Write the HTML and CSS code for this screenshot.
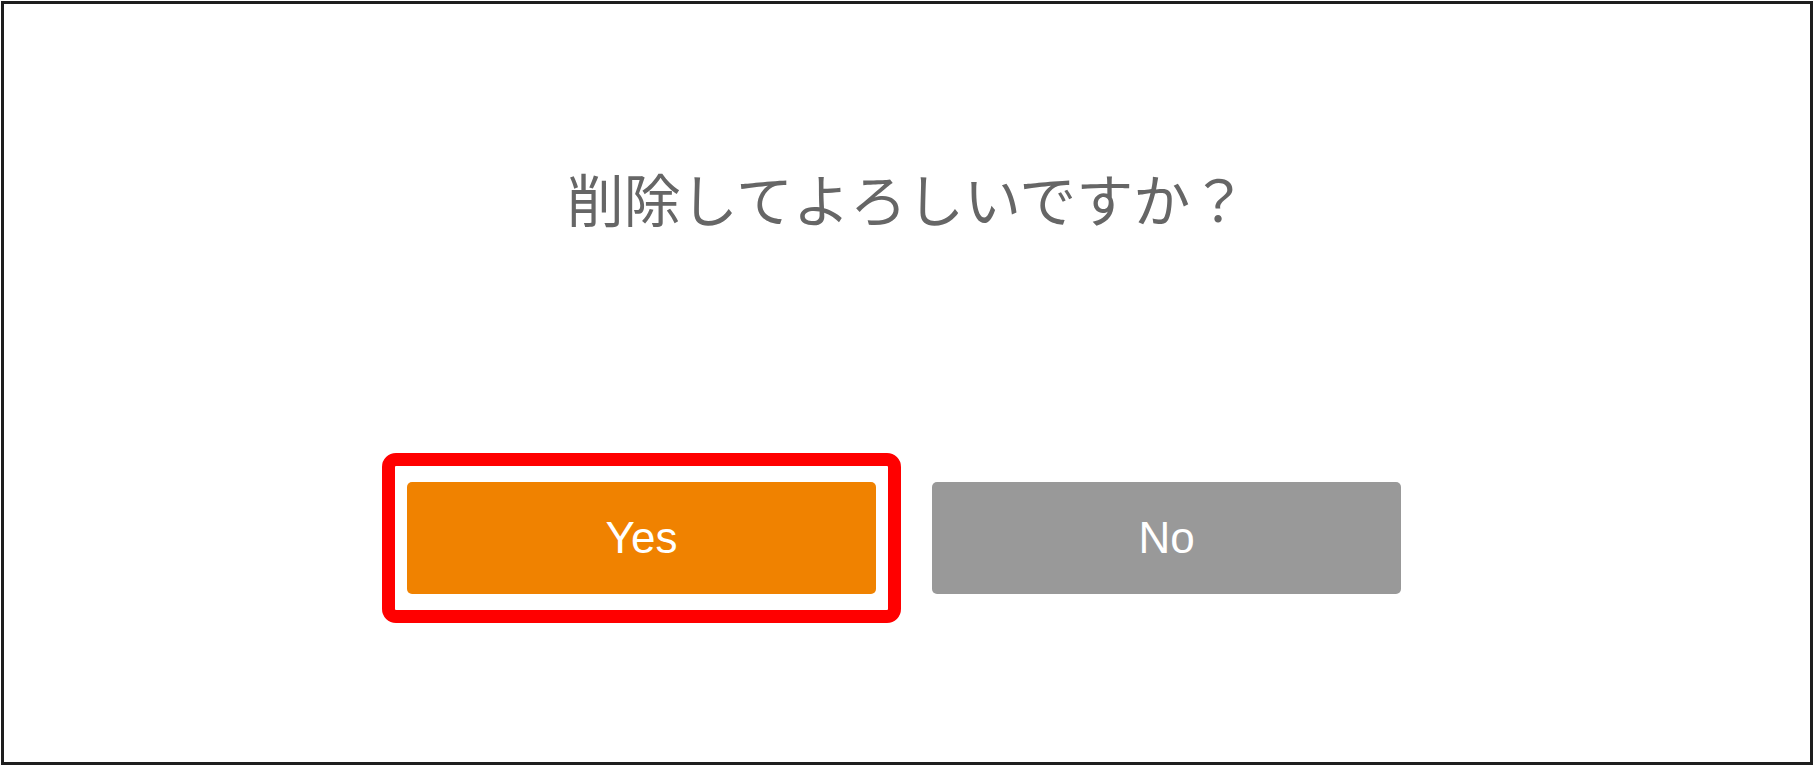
FILE: index.html
```html
<!DOCTYPE html>
<html lang="ja">
<head>
  <meta charset="UTF-8" />
  <meta name="viewport" content="width=device-width, initial-scale=1.0"/>
  <title>削除確認</title>
  <link rel="stylesheet" href="styles.css">
</head>
<body>
  <!-- Confirm dialog -->
  <div class="dialog">
    <p class="message">削除してよろしいですか？</p>
    <div class="actions">
      <button class="btn btn-yes marked">Yes</button>
      <button class="btn btn-no">No</button>
    </div>
  </div>
</body>
</html>
```

FILE: styles.css
```css
body {
  margin: 0;
  padding: 1px;
  background: #fff;
  font-family: "Noto Sans CJK JP", "Liberation Sans", sans-serif;
}

.dialog {
  box-sizing: border-box;
  width: 1812px;
  height: 764px;
  border: 3px solid #1e1e1e;
  background: #fff;
  display: flex;
  flex-direction: column;
  align-items: center;
  padding-top: 159px;
}

.message {
  margin: 0;
  font-size: 57px;
  line-height: 68px;
  color: #666;
}

.actions {
  display: flex;
  gap: 56px;
  margin-top: 251px;
  padding-right: 6px;
}

.btn {
  width: 469px;
  height: 112px;
  border: none;
  border-radius: 5px;
  color: #fff;
  font-family: "Liberation Sans", "Noto Sans CJK JP", sans-serif;
  font-size: 44px;
  cursor: pointer;
}

.btn-yes {
  background: #f08200;
}

.btn-no {
  background: #999;
}

/* red highlight around the Yes button */
.marked {
  position: relative;
}

.marked::after {
  content: "";
  position: absolute;
  top: -29px;
  bottom: -29px;
  left: -25px;
  right: -25px;
  border: 13px solid #ff0000;
  border-radius: 14px;
}
```
